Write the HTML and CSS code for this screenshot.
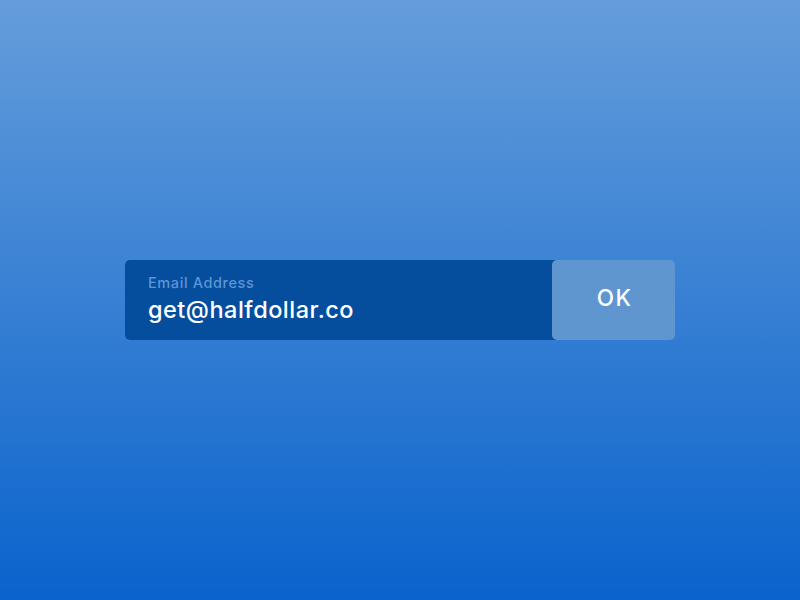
FILE: index.html
```html
<!DOCTYPE html>
<html>
<head>
<meta charset="utf-8">
<link rel="stylesheet" href="styles.css">
</head>
<body>
<div class="stage">
  <form class="signup">
    <div class="field">
      <span class="label">Email Address</span>
      <span class="value">get@halfdollar.co</span>
    </div>
    <button class="ok" type="button">OK</button>
  </form>
</div>
</body>
</html>
```
FILE: styles.css
```css
html, body {
  margin: 0;
  padding: 0;
  height: 100%;
}
body {
  background: linear-gradient(to bottom, #659ddb 0%, #0a63cc 100%);
  font-family: Inter, "Liberation Sans", sans-serif;
}
.stage {
  height: 600px;
  display: flex;
  align-items: center;
  justify-content: center;
}
.signup {
  display: flex;
  width: 550px;
  height: 80px;
  margin: 0;
}
.field {
  flex: 1;
  background: #054e9e;
  border-radius: 5px 0 0 5px;
  margin-right: -8px;
  padding: 14px 0 0 23px;
  display: flex;
  flex-direction: column;
  color: #fff;
}
.label {
  font-size: 14.5px;
  font-weight: 500;
  color: #5f95d6;
  letter-spacing: 0.6px;
  line-height: 18px;
}
.value {
  font-size: 23.5px;
  font-weight: 500;
  line-height: 30px;
  margin-top: 3px;
  letter-spacing: 0.5px;
}
.ok {
  position: relative;
  width: 123px;
  height: 80px;
  border: 0;
  border-radius: 5px;
  background: #6096d0;
  color: #fff;
  font-family: inherit;
  font-size: 22.5px;
  font-weight: 500;
  letter-spacing: 1.5px;
  padding: 0 0 5px 2px;
}
```
